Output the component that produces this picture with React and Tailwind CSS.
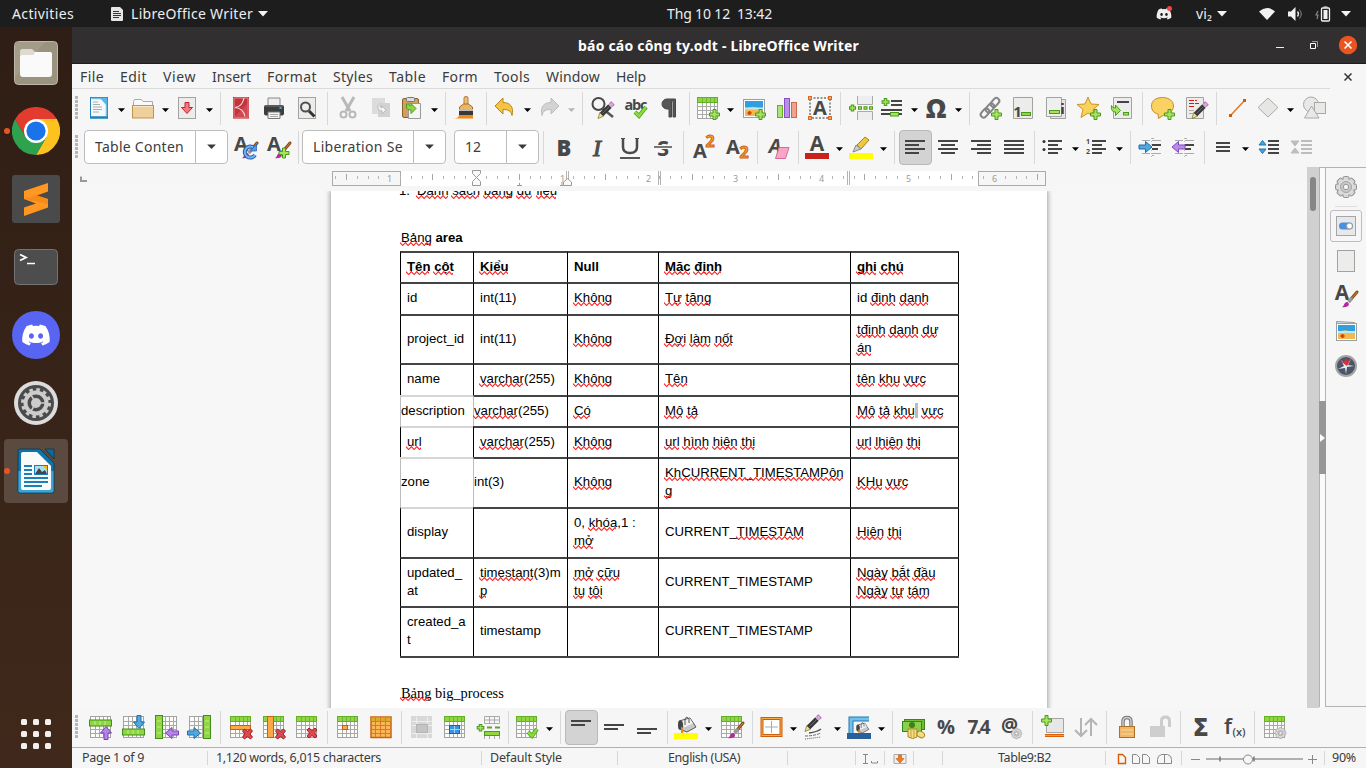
import { useLayoutEffect, useRef } from 'react';
import { FaDiscord } from 'react-icons/fa';

/* Text set to a fixed measure by adjusting its tracking */
function Fit({ w, children, className = '' }) {
  const ref = useRef(null);
  useLayoutEffect(() => {
    const el = ref.current;
    el.style.letterSpacing = '0px';
    const natural = el.getBoundingClientRect().width;
    el.style.letterSpacing = (w - natural) / Math.max(1, el.textContent.length) + 'px';
  }, [w, children]);
  return (
    <span className="inline-block shrink-0 text-left" style={{ width: w }}>
      <span ref={ref} className={'inline-block whitespace-pre ' + className}>{children}</span>
    </span>
  );
}

/* ---------- icon parts ---------- */
const G = '#8fd642';
const I = ({ children, className = 'size-6' }) => (
  <svg viewBox="0 0 24 24" className={className + ' block shrink-0 overflow-visible'} fill="none">{children}</svg>
);
const Plus = ({ x, y }) => (
  <path transform={`translate(${x} ${y})`} d="M-1.500-5h3v3.500H5v3H1.500V5h-3V1.500H-5v-3h3.500z" fill="#a6e35c" stroke="#4a9a1c" />
);
const Cross = ({ x, y }) => (
  <path transform={`translate(${x} ${y})`} d="M-5-3l2-2L0-2.500 3-5l2 2L2.500 0 5 3 3 5 0 2.500-3 5l-2-2L-2.500 0z" fill="#dc4a50" stroke="#a51d2a" />
);
const Table = ({ head = true, x = 1, y = 1 }) => (
  <g transform={`translate(${x - 1} ${y - 1})`}>
    <rect x="1.500" y="1.500" width="20" height="21" fill="#fbfbf9" stroke="#a3a39f" />
    <path d="M6.500 2v20M10.500 2v20M14.500 2v20M18.500 2v20M2 6.500h19M2 10.500h19M2 14.500h19M2 18.500h19" stroke="#a9a9a5" />
    {head && <><rect x="1.500" y="1.500" width="20" height="5" fill={G} stroke="#62b026" /><path d="M6.500 2v4M10.500 2v4M14.500 2v4M18.500 2v4" stroke="#6db832" /></>}
  </g>
);
const Page = ({ x = 3, y = 1, w = 18, h = 22 }) => (
  <rect x={x + 0.5} y={y + 0.5} width={w - 1} height={h - 1} fill="#ececea" stroke="#a2a29e" />
);
const Txt = ({ x = 12, y = 20, s = 22, children, fill = '#484848', f = 'font-bold', anchor = 'middle', ...r }) => (
  <text x={x} y={y} fontSize={s} textAnchor={anchor} fill={fill} className={"font-['Open_Sans',sans-serif] " + f} {...r}>{children}</text>
);
const Gear = ({ x = 12, y = 12, k = 1 }) => (
  <g transform={`translate(${x} ${y}) scale(${k})`}>
    {[0, 45, 90, 135].map((a) => <rect key={a} x="-3" y="-10.500" width="6" height="21" rx="1.500" transform={`rotate(${a})`} fill="#d6d6d6" stroke="#8e8e8e" />)}
    <circle r="8" fill="#dcdcdc" />
    <circle r="5.500" fill="#c8c8c8" stroke="#a5a5a5" />
    <circle r="2.700" fill="#f4f4f4" stroke="#999" />
  </g>
);
const Lines = ({ rows, x = 2, c = '#444' }) => (
  <g fill={c}>{rows.map(([dx, y, w], i) => <rect key={i} x={x + dx} y={y} width={w} height="2" />)}</g>
);
const Pencil = ({ x = 0, y = 0 }) => (
  <g transform={`translate(${x} ${y})`}>
    <path d="M8.500 18.500L17 10" stroke="#383838" strokeWidth="5" />
    <path d="M9.500 17.500L16.500 10.500" stroke="#6a6a6a" strokeWidth="1" />
    <path d="M6.700 16.700l3.600 3.600L5 22.500z" fill="#efe294" stroke="#7a6d20" strokeWidth=".7" />
    <path d="M17 10l1-1" stroke="#bbb" strokeWidth="5" />
    <path d="M18 9l2-2" stroke="#b765b5" strokeWidth="5" />
    <path d="M18 9l1.500-1.500" stroke="#e6a8e2" strokeWidth="3" />
  </g>
);
const Brush = () => (
  <g>
    <path d="M23 8l-5.500 6.500" stroke="#8a4c18" strokeWidth="3" strokeLinecap="round" />
    <path d="M23 8l-5 6" stroke="#c98643" strokeWidth="1" />
    <path d="M18 14l-3.500 4" stroke="#999" strokeWidth="3.500" />
    <path d="M8 23c2 0 1.500-4 4.500-5 2 0 3 2 2 3.500C13.500 23 10 23.500 8 23z" fill="#b8259c" />
  </g>
);
const Arrow = ({ d = 0, x, y, c = '#4fa8e0', s = '#1f6faa' }) => (
  <path transform={`translate(${x} ${y}) rotate(${d})`} d="M-6.500-2H0V-5.500L6.500 0 0 5.500V2H-6.500z" fill={c} stroke={s} />
);
const Pic = ({ x = 1, y = 3, w = 22, h = 18 }) => (
  <g transform={`translate(${x} ${y})`}>
    <rect x=".5" y=".5" width={w - 1} height={h - 1} fill="#fff" stroke="#98a0a4" />
    <rect x="2" y="2" width={w - 4} height={h - 4} fill="#2f9fe0" />
    <path d={`M2 ${h * 0.55}q${w * 0.25}-4 ${w * 0.5}-2t${w * 0.5 - 4} 0V${h - 2}H2z`} fill="#f2b850" />
    <path d={`M2 ${h * 0.5}h${w - 4}`} stroke="#bfe8f8" strokeWidth="2" />
    <path d={`M4.500 ${h - 5}h4M6.500 ${h - 7}v4`} stroke="#d8420c" strokeWidth="2" />
  </g>
);
const Bucket = () => (
  <g>
    <path d="M5 6l11-3 6 9-9 5-8-3z" fill="#c8c8c8" stroke="#555" />
    <path d="M8 6l8-2.500 3 5-9 4z" fill="#f0f0f0" />
    <path d="M11 10V4q1.500-3.500 4 0v4" stroke="#555" />
    <ellipse cx="6.500" cy="10" rx="2.500" ry="4.500" fill="#444" />
    <path d="M7 11q3 4 2 7H7z" fill="#ee8312" />
  </g>
);

const ic = {
  new: <><rect x="3.500" y="1.500" width="17" height="20" fill="#f5f9fc" stroke="#1d82bd" /><path d="M4.500 2.500h15v18" stroke="#72c0ea" strokeWidth="1.500" /><path d="M13 2h7v8z" fill="#59b5e8" /><path d="M6 6h5M6 8.500h7M6 11h9M6 13.500h9M6 16h6" stroke="#aaa" /><path d="M3 21.500h18" stroke="#1d82bd" strokeWidth="2.500" /></>,
  open: <><path d="M2.500 9V5.500l1-2h7l1.500 2h9.500V9" fill="#fafafa" stroke="#aaa" /><rect x="1.500" y="9.500" width="21" height="12.500" fill="#efcf9c" stroke="#c0934f" /><path d="M2 10.500h20" stroke="#f8e6c4" /></>,
  save: <><Page /><path d="M10 6.500h4v5h3.500L12 17.500l-5.500-6H10z" fill="#f07a80" stroke="#c4232d" /></>,
  pdf: <><rect x="4" y="1" width="16" height="21.500" fill="#c4343c" /><path d="M5 2h14v19.500H5z" stroke="#e98487" /><path d="M4 22.500L20 6v16.500z" fill="#d9575f" opacity=".6" /><path d="M15 2c-1 5-4 9-9 9.500 5 .5 9 4 10 9" stroke="#f6dada" strokeWidth="1.200" /></>,
  print: <><path d="M6 2h12v8H6z" fill="#eee" stroke="#888" /><rect x="2" y="9" width="20" height="10.500" rx="2" fill="#3d3d3d" /><path d="M3 10h18" stroke="#777" /><rect x="17.500" y="11" width="2" height="2" fill="#2cb5ef" /><path d="M6 16h12v6.500H6z" fill="#f4f4f4" stroke="#777" /><path d="M8 18.500h8M8 20.500h8" stroke="#aaa" /></>,
  preview: <><Page /><circle cx="10.500" cy="11" r="4.500" fill="#eee" stroke="#505050" strokeWidth="2" /><path d="M14 15l5.500 5.500" stroke="#333" strokeWidth="3" /></>,
  cut: <g stroke="#b9b9b9"><path d="M6 1l8 14M18 1l-8 14" strokeWidth="3" /><circle cx="7.500" cy="18.500" r="3" strokeWidth="2" /><circle cx="16.500" cy="18.500" r="3" strokeWidth="2" /></g>,
  copy: <><path d="M3 2h13v16H3z" fill="#dcdcdc" /><path d="M9 7h12v14H9z" fill="#d2d2d2" /><path d="M9 9v3q0 3 4 3v3l4-4-4-4v2q-2 0-2-3" fill="#f5f5f5" stroke="#bbb" /></>,
  paste: <><rect x="2.500" y="2.500" width="16" height="19" rx="1.500" fill="#cfa062" stroke="#8a6325" /><rect x="6.500" y="1.500" width="8" height="4" rx="1" fill="#ddd" stroke="#777" /><path d="M8.500 7.500h12v15h-12z" fill="#f5f5f3" stroke="#999" /><path d="M6.500 8v3q0 3 4.500 3v3.500l5-5-5-5V10q-2 0-2-2z" fill="#8fd642" stroke="#4b9a1f" /></>,
  clone: <><path d="M12 2.500v7" stroke="#b97c35" strokeWidth="5" strokeLinecap="round" /><path d="M12 2.500v7" stroke="#e9be7b" strokeWidth="3" strokeLinecap="round" /><path d="M5.500 14v-3l4-3h5l4 3v3z" fill="#eab668" stroke="#aa6c1f" /><rect x="5" y="13" width="14" height="3" fill="#bbb" /><rect x="5" y="15" width="14" height="5" fill="#383838" /><path d="M-1 22.500q6 0 6-3.500h14v3.500z" fill="#f18a15" /></>,
  undo: <path d="M2 10l8-8v4.500c7 0 11 4 9 13-1-5-4-6-9-6V18z" fill="#f6c445" stroke="#b98416" />,
  redo: <path d="M22 10l-8-8v4.500c-7 0-11 4-9 13 1-5 4-6 9-6V18z" fill="#d3d3d3" stroke="#bcbcbc" />,
  find: <><circle cx="7.500" cy="8" r="6" stroke="#484848" strokeWidth="2" /><path d="M11 12l11 9" stroke="#555" strokeWidth="2.500" /><Pencil x={2} /></>,
  spell: <><Txt y={14} s={14.5} x={12} textLength="23">abc</Txt><path d="M11 16l4 4 7-9" stroke="#4a9f1c" strokeWidth="4" /><path d="M11 16l4 4 7-9" stroke="#8cdb3e" strokeWidth="2.500" /></>,
  pilcrow: <path d="M18.500 3H10a5 5 0 0 0 0 10h2v8h2.500V5h1.500v16h2.500z" fill="#565656" stroke="#484848" />,
  table: <><Table /><Plus x={18.5} y={18.5} /></>,
  image: <><Pic x={1} y={3} w={22} h={19} /><Plus x={18.5} y={18.5} /></>,
  chart: <><rect x="2.500" y="9.500" width="5" height="12" fill="#aee571" stroke="#65ad28" /><rect x="9.500" y="2.500" width="5" height="19" fill="#b890ea" stroke="#8950c9" /><rect x="16.500" y="6.500" width="5" height="15" fill="#eaa492" stroke="#d1684b" /></>,
  textbox: <><rect x="2" y="2" width="20" height="20" stroke="#333" strokeDasharray="2 1.500" /><Txt s={20} y={19}>A</Txt>{[[0, 0], [20, 0], [0, 20], [20, 20]].map(([a, b]) => <rect key={a + '-' + b} x={a + 0.5} y={b + 0.5} width="3" height="3" fill="#f7a263" stroke="#d96a20" />)}</>,
  pagebreak: <><path d="M8.500 0v8.500h15V0M8.500 24v-8.500h15V24" fill="#eee" stroke="#aaa" /><path d="M3.500 8.500v7M0 12h7" stroke="#4a9a1c" strokeWidth="3.500" /><path d="M3.500 9.500v5M1 12h5" stroke="#a6e35c" strokeWidth="1.500" /><path d="M9 12h15" stroke="#4a9a1c" strokeWidth="3.500" strokeDasharray="4 1.500" /><path d="M10 12h14" stroke="#a6e35c" strokeWidth="1.500" strokeDasharray="2 3.500" /></>,
  field: <><Lines x={1} rows={[[10, 4, 11], [10, 8, 11], [0, 13, 21], [0, 17, 21]]} /><path d="M5.500 2v8M1.500 6h8" stroke="#4a9a1c" strokeWidth="3.500" /><path d="M5.500 3v6M2.500 6h6" stroke="#a6e35c" strokeWidth="1.500" /><rect x="10.500" y="16.500" width="8" height="3.500" fill="#a6e35c" stroke="#4a9a1c" /></>,
  omega: <Txt s={26} y={21.500} f="font-extrabold">Ω</Txt>,
  link: <><g stroke="#858585" strokeWidth="2"><rect x="2" y="14" width="10" height="6" rx="3" transform="rotate(-50 7 17)" /><rect x="7" y="9" width="10" height="6" rx="3" transform="rotate(-50 12 12)" /><rect x="12" y="3.500" width="10" height="6" rx="3" transform="rotate(-50 17 6.500)" /></g><Plus x={18.500} y={18.500} /></>,
  footnote: <><path d="M2.500 1.500h19v21h-19z" fill="#ececea" stroke="#a2a29e" /><Txt x={6.500} y={21} s={15}>1</Txt><rect x="10.500" y="16.500" width="9" height="3" fill="#8fd642" stroke="#4a9a1c" /></>,
  endnote: <><path d="M6.500 3.500h15v19h-15z" fill="#e6e6e4" stroke="#a2a29e" /><path d="M2.500 1.500h15v19h-15z" fill="#efefed" stroke="#a2a29e" /><rect x="5.500" y="14.500" width="10" height="3" fill="#a6e35c" stroke="#4a9a1c" /><path d="M18.500 7v2M18.500 11v7" stroke="#444" strokeWidth="2.500" /></>,
  bookmark: <><path d="M12 1l3 7 8 .5-6 5 2 8-7-4.500-7 4.500 2-8-6-5L9 8z" fill="#f8d35c" stroke="#cf9420" transform="translate(-1)" /><Plus x={18.500} y={18.500} /></>,
  crossref: <><path d="M3.500 1.500h18v21h-18z" fill="#ececea" stroke="#a2a29e" /><path d="M7 6h12" stroke="#444" strokeWidth="2" /><path d="M1.500 9.500q1 3 4 2.500V9l5 5.500-5 5v-3.500Q.5 16 1.500 9.500z" fill="#a6e35c" stroke="#4a9a1c" /><rect x="13.500" y="16.500" width="5" height="2.500" fill="#a6e35c" stroke="#4a9a1c" /></>,
  comment: <><path d="M12 1.500c7 0 11 4 11 8.500s-4 8-9 8.500L8 22.500l-.5-4.500C3 17 1 14 1 10 1 5 5 1.500 12 1.500z" fill="#f9d263" stroke="#c78e26" transform="translate(-.5)" /><Plus x={18.500} y={18.500} /></>,
  track: <><path d="M2.500 1.500h17v21h-17z" fill="#ececea" stroke="#a2a29e" /><path d="M5 4.500h8M5 7.500h10M5 10.500h6" stroke="#e01515" strokeDasharray="5 1" /><path d="M5 14.500h5M5 17.500h4" stroke="#aaa" /><Pencil x={3} /></>,
  line: <><path d="M6 19L20 4" stroke="#e87722" strokeWidth="1.500" /><rect x="4" y="18" width="3" height="3" fill="#d45c00" /><rect x="18" y="3" width="3" height="3" fill="#d45c00" /></>,
  diamond: <path d="M12 2l10 9.500L12 21 2 11.500z" fill="#e6e6e4" stroke="#aaa" />,
  shapes: <g fill="#e8e8e6" stroke="#a8a8a8"><circle cx="9" cy="8.500" r="7.500" /><rect x="12.500" y="6.500" width="11" height="11" /><path d="M9.500 10L17 22H2.500z" /></g>,
  stUpd: <><Txt x={7} y={16} s={20}>A</Txt><Brush /><path d="M20 13a5.500 5.500 0 1 0 1 7" stroke="#245fae" strokeWidth="4" /><path d="M20 13a5.500 5.500 0 1 0 1 7" stroke="#76b0f0" strokeWidth="2" /><path d="M22.500 9v7h-6z" fill="#5a98e0" stroke="#245fae" strokeWidth=".7" /></>,
  stNew: <><Txt x={7} y={16} s={20}>A</Txt><Brush /><Plus x={17} y={18} /></>,
  bold: <Txt y={20.500} s={22} f="font-extrabold">B</Txt>,
  italic: <text x="12" y="20.500" fontSize="24" textAnchor="middle" fill="#4b4b4b" stroke="#4b4b4b" className="font-['Liberation_Serif',serif] italic">I</text>,
  underline: <><path d="M5 4v8q0 6 7 6t7-6V4" stroke="#4b4b4b" strokeWidth="2.500" /><path d="M3 3.500h4M17 3.500h4" stroke="#4b4b4b" strokeWidth="1" /><path d="M2 23h20" stroke="#555" strokeWidth="2" /></>,
  strike: <><Txt y={20.500} s={22}>S</Txt><path d="M3 12h18" stroke="#f6f6f6" strokeWidth="4" /><path d="M3 12h18" stroke="#777" strokeWidth="2" /></>,
  sup: <><Txt x={8} y={23} s={20}>A</Txt><Txt x={18} y={12} s={16} fill="#f6a03c" stroke="#cf6511">2</Txt></>,
  sub: <><Txt x={8} y={19} s={20}>A</Txt><Txt x={19} y={23} s={16} fill="#f6a03c" stroke="#cf6511">2</Txt></>,
  clear: <><Txt x={9} y={18} s={20} f="font-bold italic">A</Txt><path d="M13 12.500h10l-3.500 11H9.500z" fill="#f8a5c8" stroke="#d86a98" /></>,
  color: <><Txt x={12} y={16} s={21}>A</Txt><rect y="18" width="24" height="6" fill="#c9211e" /></>,
  hilite: <><path d="M8 10l8-8 4 3-8 9z" fill="#efc63c" stroke="#a48415" /><path d="M7 10l5 4-8 3z" fill="#ccc" stroke="#888" /><rect y="18" width="24" height="6" fill="#ff0" /></>,
  left: <Lines rows={[[0, 5, 20], [0, 9, 14], [0, 13, 20], [0, 17, 14]]} />,
  center: <Lines rows={[[0, 5, 20], [3, 9, 14], [0, 13, 20], [3, 17, 14]]} />,
  right: <Lines rows={[[0, 5, 20], [6, 9, 14], [0, 13, 20], [6, 17, 14]]} />,
  just: <Lines rows={[[0, 5, 20], [0, 9, 20], [0, 13, 20], [0, 17, 20]]} />,
  bullets: <><Lines rows={[[5, 5, 14], [5, 9, 10], [5, 13, 14], [5, 17, 10]]} /><circle cx="3" cy="6.500" r="1.500" fill="#333" /><circle cx="3" cy="14.500" r="1.500" fill="#333" /></>,
  numbers: <><Lines rows={[[5, 5, 14], [5, 9, 10], [5, 13, 14], [5, 17, 10]]} /><Txt x={3} y={9} s={7}>1</Txt><Txt x={3} y={18.500} s={7}>2</Txt></>,
  indent: <><Lines x={13} rows={[[0, 9, 9], [0, 13, 6]]} /><path d="M3 5.500h8M13 5.500h9M13 18.500h9M3 18.500h8M13 3.500h2M13 20.500h2" stroke="#aaa" /><path d="M12.500 3v19" stroke="#bbb" strokeDasharray="1 2" /><Arrow x={6.500} y={12} /></>,
  outdent: <><Lines x={13} rows={[[0, 9, 9], [0, 13, 6]]} /><path d="M3 5.500h8M13 5.500h9M13 18.500h9M3 18.500h8M13 3.500h2M13 20.500h2" stroke="#aaa" /><path d="M12.500 3v19" stroke="#bbb" strokeDasharray="1 2" /><Arrow x={6.500} y={12} d={180} c="#b98aea" s="#8147c4" /></>,
  spacing: <Lines x={5} rows={[[0, 7, 14], [0, 11, 14], [0, 15, 14]]} />,
  para: <><Lines x={11} rows={[[0, 5, 11], [0, 9, 11], [0, 13, 11], [0, 17, 11]]} /><path d="M5.500 5.500l3.500 4.500H2zM5.500 18.500l3.500-4.500H2z" fill="#4aa3dd" stroke="#2575ad" /></>,
  paraDown: <><Lines x={11} c="#bdbdbd" rows={[[0, 5, 11], [0, 9, 11], [0, 13, 11], [0, 17, 11]]} /><path d="M5 11l4-5H1zM5 13l4 5H1z" fill="#bdbdbd" stroke="#bdbdbd" /></>,
  rowAbove: <><Table head={false} /><rect x=".5" y="5" width="22" height="6" fill={G} stroke="#3f8f1a" /><path d="M6 6v4M11 6v4M16 6v4" stroke="#c1ef8b" /><Arrow x={17} y={18} d={-90} c="#b485e4" s="#7a42b8" /></>,
  rowBelow: <><Table head={false} /><rect x=".5" y="14" width="22" height="6" fill={G} stroke="#3f8f1a" /><path d="M6 15v4M11 15v4M16 15v4" stroke="#c1ef8b" /><Arrow x={17} y={7} d={90} /></>,
  colBefore: <><Table head={false} /><rect x=".5" y=".5" width="7" height="23" fill={G} stroke="#3f8f1a" /><path d="M2 6h4M2 12h4M2 18h4" stroke="#c1ef8b" /><Arrow x={17} y={18} d={180} c="#b485e4" s="#7a42b8" /></>,
  colAfter: <><Table head={false} /><rect x="15.500" y=".5" width="7" height="23" fill={G} stroke="#3f8f1a" /><path d="M17 6h4M17 12h4M17 18h4" stroke="#c1ef8b" /><Arrow x={6} y={18} /></>,
  delRow: <><Table /><rect x="1.500" y="10.500" width="20" height="4" fill="#fba845" stroke="#cb5f0c" /><Cross x={18.500} y={19} /></>,
  delCol: <><Table /><rect x="5.500" y="1.500" width="6" height="21" fill="#fba845" stroke="#cb5f0c" /><Cross x={18.500} y={19} /></>,
  delTab: <><Table /><Cross x={17} y={18} /></>,
  selCell: <><Table /><rect x="6.500" y="10.500" width="5" height="4" fill="#fba845" stroke="#cb5f0c" /></>,
  selTab: <><rect x="2" y="2" width="20" height="20.500" fill="#fcb65a" stroke="#cc6210" strokeWidth="1.500" /><rect x="2.500" y="2.500" width="19" height="4" fill="#d9ac2b" /><path d="M6.500 2v20M11.500 2v20M16.500 2v20M2 6.500h20M2 10.500h20M2 14.500h20M2 18.500h20" stroke="#d87a1e" /></>,
  merge: <><rect x="1" y="1" width="21" height="22" fill="#d8d8d8" /><path d="M6.500 2v21M17.500 2v21M2 6.500h20M2 10.500h4M18 10.500h4M2 18.500h20" stroke="#eee" /><rect x="6.500" y="9.500" width="11" height="8" fill="#c4c4c4" stroke="#b4b4b4" /></>,
  splitCell: <><Table /><rect x="6.500" y="10.500" width="10" height="8" fill="#3a94e6" stroke="#1764ac" /><path d="M11.500 11v7M7 14.500h10" stroke="#a7d2f8" /></>,
  splitTab: <><path d="M8.500 1.500h15v7h-15zM8 5h15M13.500 1v8M18.500 1v8" stroke="#aaa" /><rect x="8.500" y="16.500" width="15" height="4" fill={G} stroke="#4a9a1c" /><path d="M8.500 21v3M13.500 21v3M18.500 21v3M23.500 21v3" stroke="#aaa" /><path d="M11 12.500h13" stroke="#5aa82a" strokeWidth="2" strokeDasharray="5 3" /><path d="M4.500 9v7.500M.7 12.700h7.600" stroke="#4a9a1c" strokeWidth="3.500" /><path d="M4.500 10v5.500M1.700 12.700h5.600" stroke="#a6e35c" strokeWidth="1.500" /></>,
  styles: <><Table /><path d="M13 17l4 4 5-7" stroke="#4a9f1c" strokeWidth="4" /><path d="M13 17l4 4 5-7" stroke="#8cdb3e" strokeWidth="2.500" /></>,
  vTop: <Lines rows={[[0, 5, 20], [0, 9, 14]]} />,
  vMid: <Lines rows={[[0, 9, 20], [0, 13, 14]]} />,
  vBot: <Lines rows={[[0, 13, 20], [0, 17, 14]]} />,
  fill: <><Bucket /><rect y="18" width="24" height="6" fill="#ff0" /></>,
  autofmt: <><Table /><Brush /></>,
  borders: <><rect x="3" y="3.500" width="19" height="17" fill="#fff" stroke="#cb5f0c" strokeWidth="3" /><rect x="3" y="3.500" width="19" height="17" stroke="#fba845" /><path d="M12.500 6v12M6 12h13" stroke="#aaa" /></>,
  bstyle: <><Pencil x={-3} y={-6} /><path d="M6 18q8-1 12-4" stroke="#555" strokeWidth="1.500" /><path d="M2 21q9 0 16-3" stroke="#666" strokeDasharray="3 1" /><path d="M2 24q9-1 16-2" stroke="#555" strokeDasharray="1 1" /></>,
  bcolor: <><path d="M4 18V4h18" stroke="#2377aa" strokeWidth="5" /><path d="M4 18V4h18" stroke="#70c1eb" strokeWidth="3" /><g transform="translate(6.500 6) scale(.7)"><Bucket /></g><rect y="18" width="24" height="6" fill="#2a6099" /></>,
  money: <><rect x="3.500" y="4.500" width="20" height="10" fill="#71bd37" stroke="#38831a" /><rect x="1.500" y="6.500" width="19" height="10" fill="#8dce4d" stroke="#38831a" /><circle cx="11" cy="10" r="3" fill="#38831a" /><path d="M7 14h9v8q-4 3-9 0z" fill="#f5dc80" stroke="#a9862b" /><path d="M10 15v8M13 15v8" stroke="#c5a344" /><ellipse cx="20" cy="19.500" rx="4" ry="3" transform="rotate(30 20 19)" fill="#f5dc80" stroke="#a9862b" /></>,
  pct: <Txt y={19} s={20} f="font-bold">%</Txt>,
  dec: <Txt y={19} s={19} textLength="23">7.4</Txt>,
  at: <><Txt x={9.500} y={17} s={19}>@</Txt><Gear x={16.500} y={18.500} k={0.5} /></>,
  caption: <><path d="M5.500 3.500h17v14h-17z" fill="#e7e7e7" stroke="#a5a5a5" /><rect x="4" y="19" width="19" height="3" fill="#e05e05" /><path d="M4 20.500h19" stroke="#f59b50" /><Plus x={5.500} y={5.500} /></>,
  sort: <path d="M7 3v18M1 15l6 6 6-6M17 21V4M11 10l6-6 6 6" stroke="#b4b4b4" strokeWidth="2" />,
  lock: <><path d="M8 11V6.500q0-4 4-4t4 4V11" stroke="#777" strokeWidth="3.500" /><path d="M8 11V6.500q0-4 4-4t4 4V11" stroke="#ccc" strokeWidth="1.500" /><rect x="4.500" y="11.500" width="15" height="11" fill="#efb666" stroke="#ae7029" /><path d="M6 15h12M6 19h12" stroke="#f8d7a2" /></>,
  unlock: <><path d="M13.500 11V6q0-4 4-4t4 4v6" stroke="#ccc" strokeWidth="3" /><rect x="2" y="11" width="15" height="11" fill="#cecece" /></>,
  sigma: <Txt s={24} y={20.500} f="font-extrabold">Σ</Txt>,
  fx: <><Txt x={6} y={19} s={22} f="font-semibold">f</Txt><Txt x={17} y={21} s={11} f="font-semibold" textLength="13">(x)</Txt></>,
  tprops: <><Table /><Gear x={17.500} y={18} k={0.52} /></>,
};

/* ---------- toolbar pieces ---------- */
const Tri = ({ c = '#000', w = 'w-[15px]' }) => (
  <svg viewBox="0 0 15 25" className={w + ' block h-[25px] shrink-0'}><path d="M4 12.200h7L7.500 16z" fill={c} /></svg>
);
const B = ({ n, on }) => (
  <span className={'flex h-[39px] w-[33px] shrink-0 justify-center pt-[7px] ' + (on ? 'relative' : '')}>
    {on && <span className="absolute left-0 top-[2px] h-[35px] w-[33px] rounded-[4px] border border-[#b9b9b9] bg-[#d3d3d3]" />}
    <span className={on ? 'relative' : ''}><I>{ic[n]}</I></span>
  </span>
);
const S = ({ n, off }) => (
  <span className="flex h-[39px] w-11 shrink-0 pt-[7px]">
    <span className="flex w-[29px] justify-center"><I>{ic[n]}</I></span>
    <Tri c={off ? '#b5b5b5' : '#000'} />
  </span>
);
const V = () => <span className="mx-[3.500px] mt-[3px] h-[33px] w-px shrink-0 bg-[#d8d8d8]" />;
const Grip = () => (
  <svg viewBox="0 0 12.5 39" className="h-[39px] w-[12.5px] shrink-0">
    <path d="M4.500 7v24" stroke="#b5b5b5" strokeWidth="3" strokeDasharray="3 1" />
  </svg>
);
function Bar({ spec }) {
  return spec.split(' ').map((t, i) => {
    if (t === '|') return <V key={i} />;
    if (t.endsWith('*')) return <S key={i} n={t.slice(0, -1)} off={t === 'redo*'} />;
    if (t.endsWith('!')) return <B key={i} n={t.slice(0, -1)} on />;
    return <B key={i} n={t} />;
  });
}
const Combo = ({ w, iw, tw, children, className }) => (
  <span className={'mt-[2px] flex h-[34px] shrink-0 items-center rounded-[4px] border border-[#bdbdbd] bg-white text-[14px] text-[#3c3c3c] ' + className} style={{ width: w }}>
    <span className="flex h-full shrink-0 items-center border-r border-[#bdbdbd] pb-px pl-[10px]" style={{ width: iw }}><Fit w={tw}>{children}</Fit></span>
    <svg viewBox="0 0 32 10" className="h-[10px] w-8"><path d="M11.500 2.500h9L16 7z" fill="#3a3a3a" /></svg>
  </span>
);

/* ---------- document ---------- */
const wave = 'M0 .6' + 'l2.700 2.900l2.700 -2.900'.repeat(40);
const Q = ({ children }) => (
  <span className="relative inline-block">
    {children}
    <svg className="absolute -left-[1px] top-[13px] h-[4px] w-full overflow-hidden"><path d={wave} fill="none" stroke="#ff1e1e" strokeWidth="1.100" /></svg>
  </span>
);
/* words between tildes carry the spelling mark */
const mark = (s) => s.split(/(~[^~]+~)/).map((p, i) => (p[0] === '~' ? <Q key={i}>{p.slice(1, -1)}</Q> : p));

const rows = [
  ['h-[31px]', '~Tên~ ~cột~', '~Kiểu~', 'Null', '~Mặc~ ~định~', '~ghi~ ~chú~'],
  ['h-[32px]', 'id', 'int(11)', '~Không~', '~Tự~ ~tăng~', 'id ~định~ ~danh~'],
  ['h-[49px]', 'project_id', 'int(11)', '~Không~', '~Đợi~ ~làm~ ~nốt~', '~tđịnh~ ~danh~ ~dự~\n~án~'],
  ['h-[32px]', 'name', '~varchar~(255)', '~Không~', '~Tên~', '~tên~ ~khu~ ~vực~'],
  ['h-[31px]', 'description', '~varchar~(255)', '~Có~', '~Mô~ ~tả~', '~Mô~ ~tả~ ~khu~^ ~vực~'],
  ['h-[31px]', '~url~', '~varchar~(255)', '~Không~', '~url~ ~hình~ ~hiện~ ~thị~', '~url~ ~lhiện~ ~thị~'],
  ['h-[50px]', 'zone', 'int(3)', '~Không~', '~KhCURRENT_TIMESTAMPôn~\n~g~', '~KHu~ ~vực~'],
  ['h-[50px]', 'display', '', '0, ~khóa~,1 :\n~mở~', 'CURRENT_~TIMESTAM~', '~Hiện~ ~thị~'],
  ['h-[49px]', 'updated_\nat', '~timestant~(3)m\n~p~', '~mở~ ~cữu~\n~tụ~ ~tội~', 'CURRENT_TIMESTAMP', '~Ngày~ ~bắt~ ~đầu~\n~Ngày~ ~tự~ ~tám~'],
  ['h-[50px]', 'created_a\nt', 'timestamp', '', 'CURRENT_TIMESTAMP', ''],
];

function Cell({ r, c, text }) {
  const flush = (r === 4 || r === 6) && c < 2;
  const top = c === 0 && r >= 4 && r <= 7 ? 'border-t-[#d6d6d6]' : 'border-t-[#444]';
  const left = flush ? 'border-l-[#bdbdbd]' : 'border-l-black';
  const [a, b] = text.split('^');
  return (
    <div className={`flex items-center border-l border-t-2 pb-[2px] ${top} ${left} ${c === 4 ? 'border-r border-r-black' : ''} ${flush ? '' : 'pl-[6px]'}`}>
      <div className={'whitespace-pre leading-[18px] ' + (r === 0 ? 'font-bold' : '')}>
        {mark(a)}
        {b !== undefined && <><span className="inline-block h-[15px] w-[3px] bg-[#bcbcbc] align-[-3px]" />{mark(b)}</>}
      </div>
    </div>
  );
}

function Ruler() {
  const ticks = [];
  for (let i = -13; i <= 52; i++) {
    const x = Math.round(476.5 + i * 10.8) - 72;
    if (x < 262 || x > 972) continue;
    if (i % 8 === 0) { if (i !== 0) ticks.push(<text key={i} x={x - 0.5} y="14.500" fontSize="9" textAnchor="middle" fill="#9a9a9a">{Math.abs(i / 8)}</text>); }
    else if (i % 4 === 0) ticks.push(<path key={i} d={`M${x - 0.5} 7v6`} stroke="#a5a5a5" />);
    else ticks.push(<path key={i} d={`M${x - 0.5} 9v3`} stroke="#b5b5b5" />);
  }
  return (
    <svg className="block h-6 w-full" viewBox="0 0 1235 24" fill="none">
      <path d="M9 9.500v4.500h6" stroke="#999" strokeWidth="2" />
      <rect x="329" y="4" width="577" height="15" fill="#fff" />
      <rect x="260.500" y="4.500" width="68" height="14" stroke="#aaa" />
      <rect x="906.500" y="4.500" width="67" height="14" stroke="#aaa" />
      {ticks}
      {[495, 587, 776].map((x) => <path key={x} d={`M${x - 0.500} 4v14M${x + 1.500} 4v14`} stroke="#b3b3b3" />)}
      <path d="M400.500 3.500h8v3l-4 4-4-4zM404.500 10.500l4 4v4h-8v-4zM495.500 11.500l4 3.500v3.500h-8V15z" fill="#fafafa" stroke="#999" />
      <path d="M447.500 16v3M445 18.500h5M490 15v4M488 18.500h3" stroke="#999" />
    </svg>
  );
}

const DockCell = ({ children, dot, on }) => (
  <div className={'relative mx-1 mb-1 flex h-16 w-16 items-center justify-center rounded ' + (on ? 'bg-[#5a4a40]' : '')}>
    {dot && <span className="absolute left-0 top-[29px] size-[6px] rounded-full bg-[#e95420]" />}
    {children}
  </div>
);

function Dock() {
  return (
    <aside className="flex w-[72px] shrink-0 flex-col bg-gradient-to-b from-[#2f1e15] to-[#40291b] pt-1">
      <DockCell>
        <svg viewBox="0 0 44 44" className="size-11"><rect x=".5" y=".5" width="43" height="43" rx="4" fill="#9a937f" stroke="#bdb8a8" /><path d="M1 1h30L1 36z" fill="#a39c88" /><path d="M6 11q0-3 2-3h10l3 3h15q2 0 2 2v5H6z" fill="#dedad0" /><rect x="6" y="14" width="32" height="22" rx="3" fill="#fafafa" /><path d="M21 11h15q2 0 2 3v3H18z" fill="#fafafa" /></svg>
      </DockCell>
      <DockCell dot>
        <svg viewBox="0 0 48 48" className="size-12">
          <path d="M24 24L3.200 12A24 24 0 0 1 44.800 12z" fill="#e33b2e" />
          <path d="M24 12h20.800A24 24 0 0 1 24 48L34.400 30z" fill="#fcc31e" />
          <path d="M13.600 30L3.200 12A24 24 0 0 0 24 48L34.400 30z" fill="#2ea24e" />
          <path d="M3.200 12L13.600 30 24 12z" fill="#e33b2e" />
          <circle cx="24" cy="24" r="12" fill="#fff" /><circle cx="24" cy="24" r="9.600" fill="#1a73e8" />
        </svg>
      </DockCell>
      <DockCell>
        <svg viewBox="0 0 48 48" className="size-12"><rect width="48" height="48" rx="3" fill="#4a4a4a" /><path d="M36 8v8.500L25 20.500l11 3.500v8.500L12 41v-8.500l12-4L12 24v-8z" fill="#ff9722" /><path d="M25 20.500l11 3.500v5L12 24z" fill="#f08310" opacity=".6" /></svg>
      </DockCell>
      <DockCell>
        <svg viewBox="0 0 44 36" className="h-9 w-11"><rect x=".5" y=".5" width="43" height="35" rx="4" fill="#4d4d4d" stroke="#747474" /><path d="M6 5.500l6 3-6 3" fill="none" stroke="#fff" strokeWidth="1.800" /><path d="M13 14.500h8" stroke="#fff" strokeWidth="1.500" /></svg>
      </DockCell>
      <DockCell>
        <span className="flex size-12 items-center justify-center rounded-full bg-[#5865f2] text-[30px] text-white"><FaDiscord /></span>
      </DockCell>
      <DockCell>
        <svg viewBox="0 0 44 44" className="size-11" fill="none"><circle cx="22" cy="22" r="22" fill="#dcdcdc" /><circle cx="22" cy="22" r="18" fill="#4b4b4b" /><circle cx="22" cy="22" r="13.500" stroke="#ccc" strokeWidth="3" strokeDasharray="3.530 3.530" /><circle cx="22" cy="22" r="10.500" stroke="#ccc" strokeWidth="4" /><circle cx="22" cy="22" r="5" fill="#ccc" /><path d="M22 22h9M22 22l-5-8M22 22l-5 8" stroke="#ccc" strokeWidth="1.500" /></svg>
      </DockCell>
      <DockCell dot on>
        <svg viewBox="0 0 38 46" className="h-[46px] w-[38px]"><path d="M3 1h20l14 14v28q0 2-2 2H3q-2 0-2-2V3q0-2 2-2z" fill="#0f75a8" stroke="#123c52" /><path d="M1.500 23h35v20q0 1.500-2 1.500H3q-1.500 0-1.500-1.500z" fill="#3fa3d4" /><path d="M28 1h9v10z" fill="#0f6a99" stroke="#123c52" /><path d="M6 4h14l14 14v22q0 2-2 2H6q-2 0-2-2V6q0-2 2-2z" fill="#fafafa" /><path d="M7 18h8M7 22h8M7 26h8M7 30h24M7 34h24M7 38h18" stroke="#1b7fb8" strokeWidth="2" /><rect x="17" y="17" width="14" height="10" fill="#1b7fb8" /><rect x="18" y="18" width="12" height="8" fill="#a9def2" /><path d="M18 26l4-6 3 4 3-2 2 4z" fill="#444" /><path d="M26 18h4v4z" fill="#f6b81c" /></svg>
      </DockCell>
      <div className="mt-auto mb-[19px] grid grid-cols-3 gap-[6px] self-center">
        {Array.from({ length: 9 }, (_, i) => <span key={i} className="size-[6px] rounded-[1.500px] bg-[#f2f0ee]" />)}
      </div>
    </aside>
  );
}

const Down = ({ className = '' }) => <svg viewBox="0 0 10 6" className={'h-[6px] w-[10px] shrink-0 ' + className}><path d="M0 0h10L5 5.500z" fill="#f2f2f2" /></svg>;

const menu = [['File', 24], ['Edit', 27], ['View', 33], ['Insert', 39], ['Format', 50], ['Styles', 40], ['Table', 37], ['Form', 36], ['Tools', 36], ['Window', 54], ['Help', 30]];

const Seg = ({ w, children, className = '' }) => (
  <div className={'relative flex h-[20px] shrink-0 items-center pt-px ' + className} style={{ width: w }}>
    {children}
    <span className="absolute right-0 top-[3px] h-[14px] w-px bg-[#d6d6d6]" />
  </div>
);

export default function App() {
  return (
    <div className="flex h-[768px] w-[1366px] flex-col overflow-hidden bg-[#f6f6f6] font-['Noto_Sans',sans-serif]">
      <header className="flex h-[27px] shrink-0 items-center bg-[#1d1d1d] pl-3 text-[14px] text-[#eee]">
        <Fit w={62}>Activities</Fit>
        <svg viewBox="0 0 12 14" className="ml-[37px] h-[14px] w-3"><path d="M0 1q0-1 1-1h8l3 3v10q0 1-1 1H1q-1 0-1-1z" fill="#e6e6e6" /><path d="M2 4.500h6M2 6.500h8M2 8.500h8M2 10.500h6" stroke="#333" /></svg>
        <span className="ml-2 flex"><Fit w={122}>LibreOffice Writer</Fit></span>
        <Down className="ml-[5px]" />
        <span className="ml-[399px] flex"><Fit w={105}>{'Thg 10 12  13:42'}</Fit></span>
        <span className="relative ml-[384px] text-[16px]"><FaDiscord /><span className="absolute right-0 top-0 size-[5px] rounded-full bg-[#f04747]" /></span>
        <span className="ml-[24px] flex"><Fit w={16}>vi₂</Fit></span>
        <Down className="ml-[5px]" />
        <svg viewBox="0 0 16 12" className="ml-8 h-3 w-4"><path d="M8 12L0 3.500q8-7 16 0z" fill="#f2f2f2" /></svg>
        <svg viewBox="0 0 16 14" className="ml-[13px] h-[14px] w-4" fill="none"><path d="M0 4.500h3L7.500 0v14L3 9.500H0z" fill="#f2f2f2" /><path d="M9.500 4.500q2 2.500 0 5" stroke="#eee" strokeWidth="1.300" /><path d="M11.500 2.500q3.500 4.500 0 9" stroke="#888" /></svg>
        <svg viewBox="0 0 16 16" className="ml-[11px] h-4 w-4" fill="none"><path d="M3 5L1 9h2l-1 4" stroke="#888" strokeWidth="1.200" /><rect x="6.500" y="2" width="8" height="13" rx="1" stroke="#f2f2f2" strokeWidth="1.300" /><rect x="8.500" y="4" width="4" height="9" fill="#f2f2f2" /><path d="M8.500 1h4" stroke="#f2f2f2" /></svg>
        <Down className="ml-[10px]" />
      </header>
      <div className="flex min-h-0 flex-1">
        <Dock />
        <div className="flex w-[1294px] flex-col">
          <div className="flex h-[37px] shrink-0 items-center border-b border-[#1f1d1d] bg-[#322f30] pl-[506px] text-[14px] font-bold text-white">
            <Fit w={281}>báo cáo công ty.odt - LibreOffice Writer</Fit>
            <svg viewBox="0 0 96 20" className="ml-[411px] h-5 w-24" fill="none"><path d="M6 12.500h8" stroke="#eee" /><path d="M40.500 8.500h5v5h-5z" stroke="#fff" /><path d="M42 6.500h5.500V12" stroke="#999" /><circle cx="78" cy="10" r="9.200" fill="#e95420" /><path d="M74.500 6.500l7 7M81.500 6.500l-7 7" stroke="#fff" strokeWidth="1.600" /></svg>
          </div>
          <nav className="relative flex h-[25px] shrink-0 items-center gap-4 pl-2 text-[14px] text-[#3b3b3b]">
            {menu.map(([t, w]) => <Fit key={t} w={w}>{t}</Fit>)}
            <svg viewBox="0 0 8 8" className="ml-auto mr-[14px] size-2"><path d="M.5.5l7 7M7.500.5l-7 7" stroke="#333" strokeWidth="1.500" /></svg>
            <span className="absolute bottom-0 left-0 h-px w-[1258px] bg-[#dadada]" />
          </nav>
          <div className="flex h-[39px] shrink-0 overflow-hidden">
            <Grip />
            <Bar spec="new* open* save* | pdf print preview | cut copy paste* | clone | undo* redo* | find spell pilcrow | table* image chart textbox | pagebreak field* omega* | link footnote endnote bookmark crossref | comment track | line diamond* shapes" />
          </div>
          <div className="flex h-[39px] shrink-0 overflow-hidden">
            <Grip />
            <Combo w={144} iw={111} tw={89} className="-ml-[.5px] mr-[1.500px]">Table Conten</Combo>
            <Bar spec="stUpd stNew" />
            <span className="mx-[2.750px] mt-[3px] h-[33px] w-px shrink-0 bg-[#d8d8d8]" />
            <Combo w={144} iw={111} tw={90} className="mr-2">Liberation Se</Combo>
            <Combo w={85} iw={52} tw={16} className="mr-[.5px]">12</Combo>
            <Bar spec="| bold italic underline strike | sup sub | clear | color* hilite* | left! center right just | bullets* numbers* | indent outdent | spacing* para paraDown" />
          </div>
          <div className="flex h-[541px] shrink-0">
            <div className="flex w-[1235px] flex-col">
              <Ruler />
              <div className="flex h-[517px] justify-start overflow-hidden bg-[#f7f7f7] pl-[259px]">
                <article className="h-[560px] w-[716px] shrink-0 bg-white pl-[69px] font-['Liberation_Sans',sans-serif] text-[13.200px] text-black shadow-[0_0_5px_1px_rgba(0,0,0,0.35)]">
                  <p className="-mt-[9px] -ml-px h-[18px] whitespace-pre leading-[18px]"><span className="inline-block w-[18px]">1.</span>{mark('~Danh~ ~sách~ ~bảng~ ~dữ~ ~liệu~')}</p>
                  <p className="mt-[29px] h-[18px] whitespace-pre pl-px leading-[18px]">{mark('~Bảng~ ')}<b>area</b></p>
                  <div className="mt-[4px] w-[559px] border-b-2 border-[#444]">
                    {rows.map(([h, ...cells], r) => (
                      <div key={r} className={'grid grid-cols-[73px_94px_91px_192px_109px] ' + h}>
                        {cells.map((t, c) => <Cell key={c} r={r} c={c} text={t} />)}
                      </div>
                    ))}
                  </div>
                  <p className="mt-[26px] whitespace-pre pl-px font-['Liberation_Serif',serif] text-[14.400px] leading-[18px]">{mark('~Bảng~ big_process')}</p>
                </article>
              </div>
            </div>
            <div className="flex w-3 justify-center bg-[#d0d0d0] pt-[10px]"><span className="h-[34px] w-[6px] rounded-full bg-[#868686]" /></div>
            <div className="flex h-[540px] w-[7px] flex-col border-x border-t border-[#b3b3b3] bg-[#fafafa] pt-[233px]">
              <span className="-mx-px flex h-[73px] items-center justify-center bg-[#979797]"><svg viewBox="0 0 5 8" className="h-2 w-[5px]"><path d="M0 0l5 4-5 4z" fill="#fff" /></svg></span>
            </div>
            <aside className="flex h-[540px] w-10 flex-col items-center border-y border-[#b3b3b3] pt-[7px]">
              <I><Gear k={1} /></I>
              <span className="mt-[7px] h-px w-[22px] bg-[#dedede]" />
              <span className="mt-[3px] flex h-8 w-8 items-center justify-center rounded-[3px] border border-[#bdbdbd]"><I><rect x="2.500" y="2.500" width="19" height="19" fill="#e8e8e8" stroke="#a5a5a5" /><rect x="5" y="8.500" width="14" height="7" rx="3.500" fill="#4a90e2" /><circle cx="15.500" cy="12" r="3" fill="#fff" stroke="#999" /></I></span>
              <span className="mt-[7px]"><I><Page /></I></span>
              <span className="mt-[11px]"><I><Txt x={8} y={16} s={21}>A</Txt><Brush /></I></span>
              <span className="mt-[11px]"><I><path d="M2.500 2.500l18 1v14l-18 2z" fill="#cfe3ee" stroke="#999" /><Pic x={2} y={4} w={21} h={18} /></I></span>
              <span className="mt-[11px]"><I><circle cx="12" cy="12" r="10" fill="#4c566b" stroke="#a5a5a5" strokeWidth="2" /><path d="M17 5l-3 6 6 1-7 1-1 7-1-6-7 1 6-3-3-6 4 4z" fill="#e8e8e8" /><path d="M17 5l-4 7-4-3-4-2 5 1 2-4 1 3z" fill="#d9303a" /></I></span>
            </aside>
          </div>
          <div className="flex h-[39px] shrink-0 overflow-hidden">
            <Grip />
            <Bar spec="rowAbove rowBelow colBefore colAfter | delRow delCol delTab | selCell selTab | merge splitCell splitTab | styles* | vTop! vMid vBot | fill* autofmt | borders* bstyle* bcolor* | money pct dec at | caption sort | lock unlock | sigma fx | tprops" />
          </div>
          <footer className="flex h-[21px] shrink-0 border-t border-[#b0b0b0] text-[12.500px] text-[#3b3b3b]">
            <Seg w={136} className="pl-[10px]"><Fit w={62}>Page 1 of 9</Fit></Seg>
            <Seg w={274} className="pl-[8px]"><Fit w={165}>1,120 words, 6,015 characters</Fit></Seg>
            <Seg w={136} className="pl-[8px]"><Fit w={72}>Default Style</Fit></Seg>
            <Seg w={170} className="pl-[50px]"><Fit w={72}>English (USA)</Fit></Seg>
            <Seg w={68} />
            <Seg w={29} className="pl-[6px]"><svg viewBox="0 0 18 12" className="h-3 w-[18px]" fill="none" stroke="#888"><path d="M1 1.500h5M3.500 1.500v9M1 10.500h5M9.500 8v2h6V8" /></svg></Seg>
            <Seg w={29} className="pl-[8px]"><svg viewBox="0 0 14 12" className="h-3 w-[14px]"><path d="M1 1.500h12v9H1z" fill="#eee" stroke="#aaa" /><path d="M5.500 2h3v3.500H11L7 10 3 5.500h2.500z" fill="#ee7b22" stroke="#c8560a" strokeWidth=".6" /></svg></Seg>
            <Seg w={29} />
            <Seg w={163} className="pl-[55px]"><Fit w={53}>Table9:B2</Fit></Seg>
            <Seg w={76} className="pl-[11px]"><svg viewBox="0 0 56 12" className="h-3 w-14" fill="none" stroke="#888"><path d="M1.500 1.500h4l3 3v6h-7z" stroke="#dc5a04" strokeWidth="1.400" /><path d="M15.500 1.500h4l3 3v6h-7zM25.500 1.500h4l3 3v6h-7zM47.500 10.500v-9h3q4 1 4 5v4zM47.500 10.500v-9h-3q-4 1-4 5v4z" /></svg></Seg>
            <Seg w={143}><svg viewBox="0 0 142 16" className="h-4 w-[142px]" fill="none" stroke="#888"><path d="M9 8.500h9M126 8.500h9M130.500 4v9" /><path d="M24 8h97" stroke="#999" strokeWidth="1.500" /><path d="M38 5.500v5M72 5.500v5" stroke="#777" strokeWidth="1.500" /><circle cx="66" cy="8.500" r="4.500" fill="#f6f6f6" /></svg></Seg>
            <span className="flex h-5 items-center pl-[7px] pt-px"><Fit w={24}>90%</Fit></span>
          </footer>
        </div>
      </div>
    </div>
  );
}
